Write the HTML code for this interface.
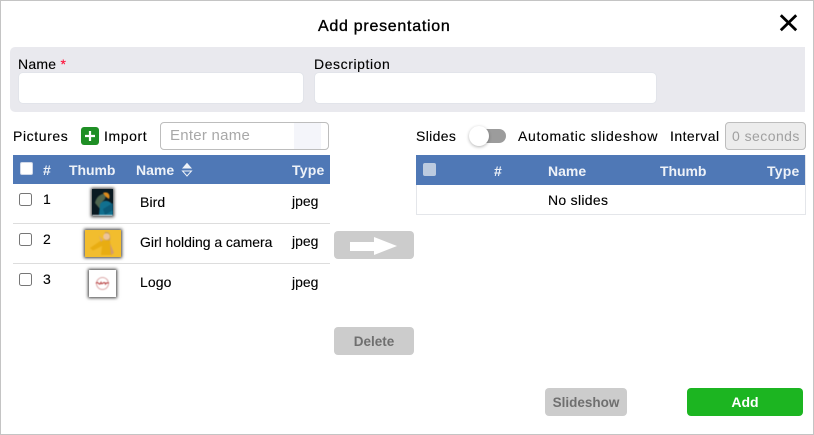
<!DOCTYPE html>
<html><head><meta charset="utf-8"><style>
*{box-sizing:border-box}
html,body{margin:0;padding:0;background:#fff}
body{width:814px;height:435px;position:relative;overflow:hidden;font-family:"Liberation Sans",sans-serif;color:#000;font-size:14px}
.a{position:absolute}
.t{position:absolute;white-space:nowrap;line-height:18px;-webkit-text-stroke:.12px #000}
.h{color:#eef2f8;font-weight:bold;font-size:14px;-webkit-text-stroke:0}
.cb{position:absolute;width:13px;height:13px;border:1px solid #767676;border-radius:2.5px;background:#fff}
.in{position:absolute;background:#fff;border:1px solid #e2e4ea;border-radius:5px}
.btn{position:absolute;background:#ccc;border-radius:4px;color:#6f6f6f;font-weight:bold;font-size:13.5px;text-align:center;line-height:29px}
.th{position:absolute;box-shadow:0 0 3px 1px rgba(0,0,0,.75);overflow:hidden}
.th svg{display:block;filter:blur(.45px)}
</style></head><body>
<div class="a" style="left:0;top:0;width:814px;height:435px;border:1px solid #c4c4c4"></div>
<div class="t" style="left:318px;top:18px;font-size:16px;letter-spacing:.72px;-webkit-text-stroke:.35px #000">Add presentation</div>
<svg class="a" style="left:778px;top:12px" width="22" height="22" viewBox="0 0 22 22"><path d="M2.800 3.300L18.200 18.300M18.200 3.300L2.800 18.300" stroke="#000" stroke-width="2.800" fill="none"/></svg>

<div class="a" style="left:10px;top:47px;width:795px;height:65px;background:#e9e9ee;border-radius:5px 0 0 5px"></div>
<div class="t" style="left:18px;top:55px;letter-spacing:.25px">Name <span style="color:#ff1038;-webkit-text-stroke:.12px #ff1038">*</span></div>
<div class="in" style="left:18px;top:72px;width:286px;height:32px"></div>
<div class="t" style="left:314px;top:55px;letter-spacing:.58px">Description</div>
<div class="in" style="left:314px;top:72px;width:343px;height:32px"></div>

<div class="t" style="left:13px;top:127px;letter-spacing:.6px">Pictures</div>
<div class="a" style="left:81px;top:127px;width:18px;height:18px;background:#1f8f25;border-radius:3px"></div>
<svg class="a" style="left:81px;top:127px" width="18" height="18" viewBox="0 0 18 18"><path d="M9 4V14M4 9H14" stroke="#fff" stroke-width="2.200"/></svg>
<div class="t" style="left:104px;top:127px;letter-spacing:.6px">Import</div>
<div class="a" style="left:160px;top:122px;width:169px;height:28px;border:1px solid #bdbdbd;border-radius:4px;background:#fff"></div>
<div class="a" style="left:294px;top:123px;width:27px;height:26px;background:#f4f5fa"></div>
<div class="t" style="left:170px;top:127px;color:#a8a8a8;font-size:15px;letter-spacing:.25px;-webkit-text-stroke:0">Enter name</div>

<div class="a" style="left:13px;top:155px;width:317px;height:29px;background:#4f78b6"></div>
<div class="a" style="left:20px;top:162px;width:13px;height:13px;background:#fff;border-radius:2px;border:1px solid #d0d8e8"></div>
<div class="t h" style="left:43px;top:161px">#</div>
<div class="t h" style="left:69px;top:161px;letter-spacing:-.05px">Thumb</div>
<div class="t h" style="left:136px;top:161px">Name</div>
<svg class="a" style="left:181px;top:162px" width="12" height="15" viewBox="0 0 12 15"><path d="M1 6.500L6 .8L11 6.500Z" fill="#eef2f8"/><path d="M1.500 9H10.500L6 14Z" fill="none" stroke="#eef2f8" stroke-width="1"/></svg>
<div class="t h" style="left:292px;top:161px;letter-spacing:.2px">Type</div>

<div class="cb" style="left:19px;top:193px"></div>
<div class="t" style="left:43px;top:190px">1</div>
<div class="th" style="left:92px;top:189px;width:21px;height:27px;background:#0a1a22"><svg width="21" height="27" viewBox="0 0 21 27"><path d="M3 14C4 8 9 4 14 5L13 10L10 13L8 20Z" fill="#4f6650"/><path d="M11 4C15 2 19 5 17 10L14 8Z" fill="#dd8a1c"/><path d="M8 15C12 10 18 11 21 17V26H7Z" fill="#11708f"/><path d="M11 20L21 14V21L13 26Z" fill="#0c5a78"/><rect y="26" width="21" height="1" fill="#fff"/></svg></div>
<div class="t" style="left:140px;top:193px;letter-spacing:.1px">Bird</div>
<div class="t" style="left:292px;top:192px">jpeg</div>
<div class="a" style="left:13px;top:223px;width:317px;height:1px;background:#ddd"></div>

<div class="cb" style="left:19px;top:233px"></div>
<div class="t" style="left:43px;top:230px">2</div>
<div class="th" style="left:85px;top:230px;width:36px;height:27px;background:#f2bd2e"><svg width="36" height="27" viewBox="0 0 36 27"><path d="M20 2C25 1 26 6 25 11L19 10Z" fill="#c9a05e"/><circle cx="21.500" cy="6.500" r="3.300" fill="#edc49a"/><path d="M5 18L16 10.500H25L27 25H16L17 16L8 20.500Z" fill="#e8ad12"/><path d="M25 13L29 23L26 25Z" fill="#d09a70"/><path d="M14 6L18 10L16 12Z" fill="#d8a878"/></svg></div>
<div class="t" style="left:140px;top:233px;letter-spacing:-.03px">Girl holding a camera</div>
<div class="t" style="left:292px;top:232px">jpeg</div>
<div class="a" style="left:13px;top:263px;width:317px;height:1px;background:#ddd"></div>

<div class="cb" style="left:19px;top:273px"></div>
<div class="t" style="left:43px;top:270px">3</div>
<div class="th" style="left:89px;top:270px;width:27px;height:27px;background:#fff"><svg width="27" height="27" viewBox="0 0 27 27"><circle cx="13.500" cy="13.500" r="6" fill="none" stroke="#dba8a8" stroke-width="1"/><path d="M7 13.500C9 10 10 17 12 12.500C13 16 15 10 16.500 14C17.500 12 19 13 20 13" fill="none" stroke="#b84040" stroke-width="1.100"/></svg></div>
<div class="t" style="left:140px;top:273px;letter-spacing:.1px">Logo</div>
<div class="t" style="left:292px;top:273px">jpeg</div>

<div class="btn" style="left:334px;top:231px;width:80px;height:28px"></div>
<svg class="a" style="left:334px;top:231px" width="80" height="28" viewBox="0 0 80 28"><path d="M16 11H40V6L63 15L40 24V20H16Z" fill="#fff"/></svg>
<div class="btn" style="left:334px;top:327px;width:80px;height:28px">Delete</div>

<div class="t" style="left:416px;top:127px;letter-spacing:.35px">Slides</div>
<div class="a" style="left:478px;top:129px;width:28px;height:14px;border-radius:7px;background:#9c9c9c"></div>
<div class="a" style="left:469px;top:126px;width:20px;height:20px;border-radius:50%;background:#fff;box-shadow:0 1px 3px rgba(0,0,0,.3)"></div>
<div class="t" style="left:518px;top:127px;letter-spacing:.66px">Automatic slideshow</div>
<div class="t" style="left:670px;top:127px;letter-spacing:.45px">Interval</div>
<div class="a" style="left:725px;top:122px;width:81px;height:28px;border:1px solid #bdbdbd;border-radius:4px;background:#ececec"></div>
<div class="t" style="left:732px;top:127px;color:#a0a0a0;letter-spacing:.45px;-webkit-text-stroke:0">0 seconds</div>

<div class="a" style="left:416px;top:155px;width:390px;height:60px;border:1px solid #e4e6ea;border-top:none"></div>
<div class="a" style="left:416px;top:155px;width:389px;height:30px;background:#4f78b6"></div>
<div class="a" style="left:423px;top:163px;width:13px;height:13px;background:#bccbe0;border-radius:2px"></div>
<div class="t h" style="left:494px;top:162px">#</div>
<div class="t h" style="left:548px;top:162px">Name</div>
<div class="t h" style="left:660px;top:162px;letter-spacing:-.05px">Thumb</div>
<div class="t h" style="left:767px;top:162px;letter-spacing:.2px">Type</div>
<div class="t" style="left:548px;top:191px;letter-spacing:.3px">No slides</div>

<div class="btn" style="left:545px;top:388px;width:82px;height:28px">Slideshow</div>
<div class="btn" style="left:687px;top:388px;width:116px;height:28px;background:#1cb521;color:#fff;font-size:14px;line-height:28px">Add</div>
</body></html>
